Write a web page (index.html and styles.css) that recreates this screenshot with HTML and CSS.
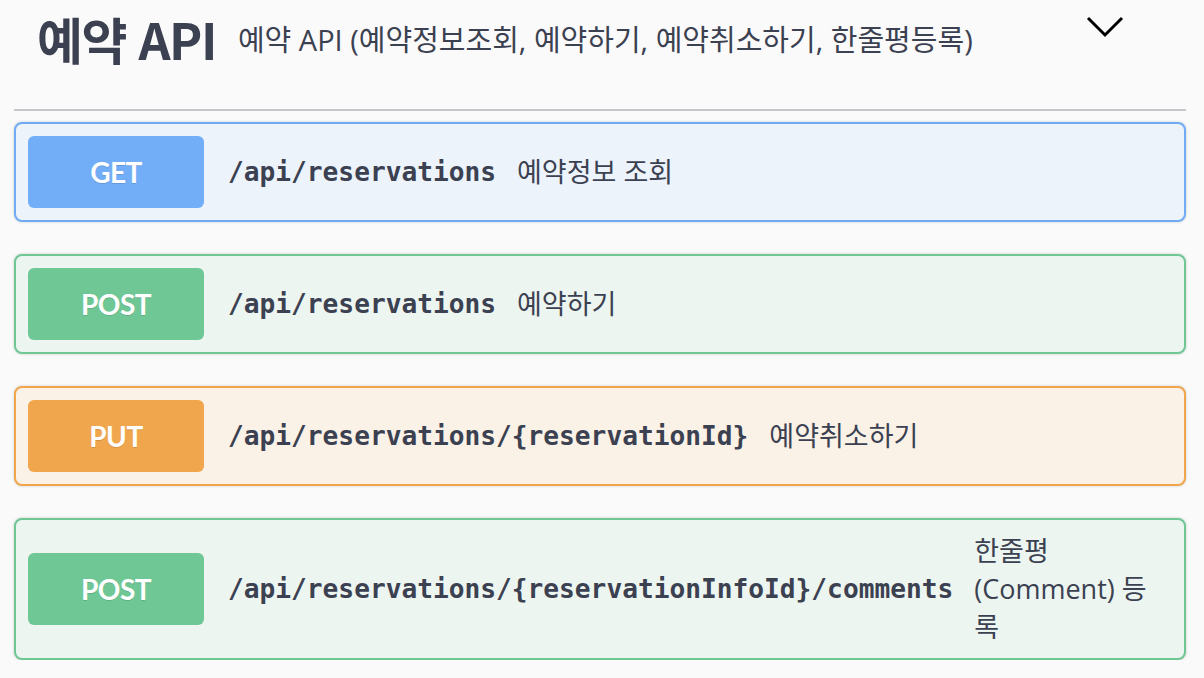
FILE: index.html
```html
<!DOCTYPE html>
<html lang="ko">
<head>
<meta charset="utf-8">
<title>예약 API</title>
<link rel="stylesheet" href="styles.css">
</head>
<body>
<div class="wrapper">
  <div class="tag-header">
    <span class="tag-title">예약 API</span>
    <span class="tag-desc">예약 API (예약정보조회, 예약하기, 예약취소하기, 한줄평등록)</span>
    <button class="expand" aria-label="collapse">
      <svg width="38" height="22" viewBox="0 0 38 22"><path d="M2 2 L19 19 L36 2" fill="none" stroke="#000" stroke-width="3"/></svg>
    </button>
  </div>
  <div class="ops">
    <div class="op op-get">
      <span class="method">GET</span>
      <span class="path">/api/reservations</span>
      <span class="desc">예약정보 조회</span>
    </div>
    <div class="op op-post">
      <span class="method">POST</span>
      <span class="path">/api/reservations</span>
      <span class="desc">예약하기</span>
    </div>
    <div class="op op-put">
      <span class="method">PUT</span>
      <span class="path">/api/reservations/{reservationId}</span>
      <span class="desc">예약취소하기</span>
    </div>
    <div class="op op-post">
      <span class="method">POST</span>
      <span class="path">/api/reservations/{reservationInfoId}/comments</span>
      <span class="desc">한줄평 (Comment) 등록</span>
    </div>
  </div>
</div>
</body>
</html>
```

FILE: styles.css
```css
html, body {
  margin: 0;
  padding: 0;
  background: #fafafa;
}
body {
  font-family: "Open Sans", "Noto Sans CJK KR", sans-serif;
  color: #3b4151;
}
.wrapper {
  padding: 0 18px 0 14px;
}
.tag-header {
  display: flex;
  align-items: center;
  height: 76px;
  padding: 0 0 33px 23px;
  border-bottom: 2px solid #c6c6ca;
}
.tag-title {
  font-family: "Noto Sans CJK KR", sans-serif;
  font-size: 50px;
  font-weight: 700;
  color: #3b4151;
  letter-spacing: -1.5px;
}
.tag-desc {
  font-size: 29px;
  margin-left: 22px;
  flex: 1;
}
.expand {
  align-self: flex-start;
  background: none;
  border: none;
  padding: 0;
  margin: 16px 62px 0 0;
  display: flex;
  cursor: pointer;
}
.ops {
  display: flex;
  flex-direction: column;
  gap: 32px;
  padding-top: 11px;
}
.op {
  display: flex;
  align-items: center;
  border: 2px solid;
  border-radius: 8px;
  padding: 12px;
  box-shadow: 0 0 3px rgba(0, 0, 0, 0.19);
}
.method {
  flex-shrink: 0;
  width: 176px;
  height: 72px;
  border-radius: 6px;
  display: flex;
  align-items: center;
  justify-content: center;
  font-family: Lato, "Noto Sans", sans-serif;
  font-weight: 700;
  font-size: 28px;
  letter-spacing: -0.5px;
  color: #fff;
  text-shadow: 0 1px 0 rgba(0, 0, 0, 0.12);
}
.path {
  flex-shrink: 0;
  font-family: "DejaVu Sans Mono", monospace;
  font-weight: 700;
  font-size: 26.2px;
  padding: 0 21px 0 24px;
  color: #3b4151;
}
.desc {
  flex: 1;
  font-size: 27px;
  line-height: 38px;
  padding-right: 12px;
}
.op-get {
  background: #ecf3fb;
  border-color: #71abf6;
}
.op-get .method { background: #72aef8; }
.op-post {
  background: #edf5f0;
  border-color: #6fc793;
}
.op-post .method { background: #6ec794; }
.op-put {
  background: #faf1e7;
  border-color: #f0a64d;
}
.op-put .method { background: #f0a64c; }
```
